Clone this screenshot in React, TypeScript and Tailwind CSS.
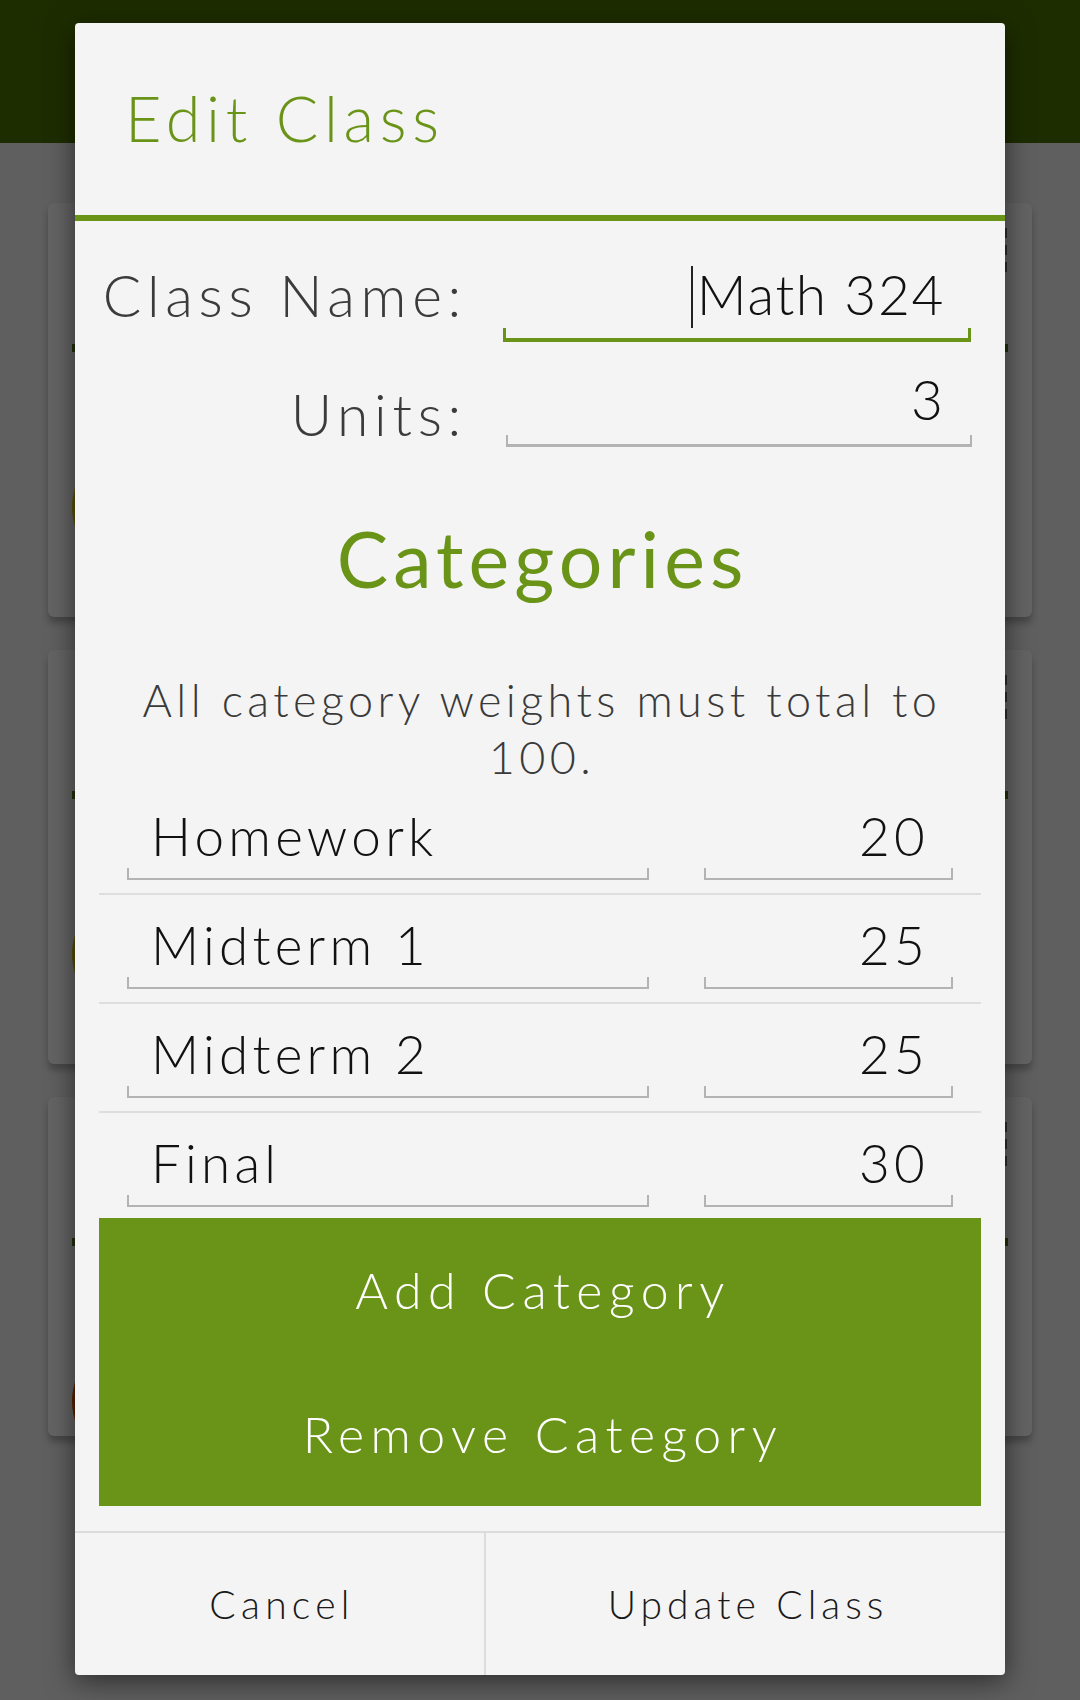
import React from "react";

const GREEN = "bg-[#6a9418]";

function BgCard({ h, circle }: { h: string; circle: string }) {
  return (
    <div className={`relative ${h} rounded-[6px] bg-[#646464] shadow-[0_6px_6px_rgba(0,0,0,0.25)] px-[24px]`}>
      <div className="flex justify-end pt-[25px]">
        <div className="flex flex-col gap-[7px] mr-[1px]">
          <div className="w-[8px] h-[10px] bg-[#2e2e2e]" />
          <div className="w-[8px] h-[10px] bg-[#2e2e2e]" />
          <div className="w-[8px] h-[10px] bg-[#2e2e2e]" />
        </div>
      </div>
      <div className="mt-[72px] h-[8px] bg-[#23320a]" />
      <div className={`mt-[90px] w-[130px] h-[130px] rounded-full ${circle}`} />
    </div>
  );
}

function Field({ value, wide }: { value: string; wide?: boolean }) {
  return (
    <div className={wide ? "w-[522px]" : "w-[249px]"}>
      <div
        className={`h-[53px] text-[53px] leading-none font-light text-[#111] tracking-[0.08em] ${
          wide ? "pl-[24px] text-left" : "pr-[24px] text-right"
        }`}
      >
        {value}
      </div>
      <div className="mt-[6px] h-[12px] border-x-2 border-b-2 border-[#b3b3b3]" />
    </div>
  );
}

function CatRow({ name, weight, last }: { name: string; weight: string; last?: boolean }) {
  return (
    <>
      <div className={`${last ? "h-[105px]" : "h-[107px]"} flex items-start gap-[55px] px-[28px] pt-[23px]`}>
        <Field value={name} wide />
        <Field value={weight} />
      </div>
      {!last && <div className="h-[2px] bg-[#dedede]" />}
    </>
  );
}

export default function App() {
  return (
    <div
      className="relative w-[1080px] h-[1700px] overflow-hidden bg-[#5f5f5f]"
      style={{ fontFamily: "Lato, 'Open Sans', sans-serif" }}
    >
      <div className="h-[143px] bg-[#1e2d00]" />
      <div className="flex flex-col gap-[33px] px-[48px] pt-[60px]">
        <BgCard h="h-[414px]" circle="bg-[#5a5400]" />
        <BgCard h="h-[414px]" circle="bg-[#575000]" />
        <BgCard h="h-[339px]" circle="bg-[#5a2200]" />
      </div>

      {/* Dialog */}
      <div className="absolute left-[75px] top-[23px] w-[930px] h-[1652px] rounded-[4px] bg-[#f4f4f4] shadow-[0_6px_28px_rgba(0,0,0,0.55)] flex flex-col overflow-hidden">
        <div className="h-[192px] pl-[50px] pt-[63px]">
          <div className="text-[63px] leading-none font-light text-[#6a9418] tracking-[0.09em]">Edit Class</div>
        </div>
        <div className={`h-[6px] ${GREEN}`} />

        {/* Class name row */}
        <div className="flex items-start">
          <div className="w-[392px] mt-[46px] h-[57px] text-right text-[57px] leading-none font-light text-[#3b3b3b] tracking-[0.1em]">
            Class Name:
          </div>
          <div className="w-[468px] ml-[36px] mt-[46px]">
            <div className="h-[57px] flex justify-end items-start pr-[26px]">
              <div className="w-[2px] h-[62px] bg-[#222] mt-[-1px] mr-[4px] shrink-0" />
              <span className="text-[55px] leading-none font-light text-[#111] tracking-[0.03em]">Math 324</span>
            </div>
            <div className="mt-[4px] h-[14px] border-x-[3px] border-b-[4px] border-[#6a9418]" />
          </div>
        </div>

        {/* Units row */}
        <div className="flex items-start">
          <div className="w-[392px] mt-[44px] h-[57px] text-right text-[57px] leading-none font-light text-[#3b3b3b] tracking-[0.1em]">
            Units:
          </div>
          <div className="w-[466px] ml-[39px] mt-[30px]">
            <div className="h-[57px] text-right pr-[29px] text-[55px] leading-none font-light text-[#111]">3</div>
            <div className="mt-[6px] h-[12px] border-x-2 border-b-[3px] border-[#b3b3b3]" />
          </div>
        </div>

        <div className="mt-[73px] h-[77px] pl-[5px] text-center text-[77px] leading-none font-normal text-[#6a9418] tracking-[0.066em]">
          Categories
        </div>

        <div className="mt-[75px] pl-[4px] text-center text-[45px] leading-[57px] font-light text-[#3a3a3a] tracking-[0.098em]">
          All category weights must total to
          <br />
          100.
        </div>

        <div className="px-[24px] flex flex-col">
          <CatRow name="Homework" weight="20" />
          <CatRow name="Midterm 1" weight="25" />
          <CatRow name="Midterm 2" weight="25" />
          <CatRow name="Final" weight="30" last />

          <div className={`${GREEN} flex flex-col`}>
            <button className="h-[144px] pl-[6px] flex items-center justify-center text-[50px] leading-none font-light text-white tracking-[0.13em]">
              Add Category
            </button>
            <button className="h-[144px] pl-[6px] flex items-center justify-center text-[50px] leading-none font-light text-white tracking-[0.13em]">
              Remove Category
            </button>
          </div>
        </div>

        <div className="mt-[25px] h-[2px] bg-[#dcdcdc]" />
        <div className="flex h-[142px]">
          <button className="w-[409px] pl-[5px] flex items-center justify-center text-[39px] leading-none font-light text-[#1a1a1a] tracking-[0.135em]">
            Cancel
          </button>
          <div className="w-[2px] bg-[#dcdcdc]" />
          <button className="flex-1 pl-[5px] flex items-center justify-center text-[39px] leading-none font-light text-[#1a1a1a] tracking-[0.128em]">
            Update Class
          </button>
        </div>
      </div>
    </div>
  );
}
